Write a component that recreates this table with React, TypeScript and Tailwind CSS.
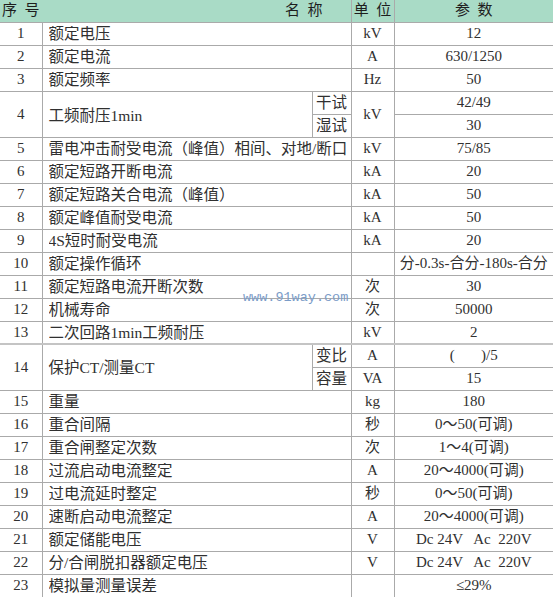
import React from 'react';

type Row = [number, string, string, string];

const rowsA: Row[] = [
  [1, '额定电压', 'kV', '12'],
  [2, '额定电流', 'A', '630/1250'],
  [3, '额定频率', 'Hz', '50'],
];

const rowsB: Row[] = [
  [5, '雷电冲击耐受电流（峰值）相间、对地/断口', 'kV', '75/85'],
  [6, '额定短路开断电流', 'kA', '20'],
  [7, '额定短路关合电流（峰值）', 'kA', '50'],
  [8, '额定峰值耐受电流', 'kA', '50'],
  [9, '4S短时耐受电流', 'kA', '20'],
  [10, '额定操作循环', '', '分-0.3s-合分-180s-合分'],
  [11, '额定短路电流开断次数', '次', '30'],
  [12, '机械寿命', '次', '50000'],
  [13, '二次回路1min工频耐压', 'kV', '2'],
];

const rowsC: Row[] = [
  [15, '重量', 'kg', '180'],
  [16, '重合间隔', '秒', '0～50(可调)'],
  [17, '重合闸整定次数', '次', '1～4(可调)'],
  [18, '过流启动电流整定', 'A', '20～4000(可调)'],
  [19, '过电流延时整定', '秒', '0～50(可调)'],
  [20, '速断启动电流整定', 'A', '20～4000(可调)'],
  [21, '额定储能电压', 'V', 'Dc 24V   Ac  220V'],
  [22, '分/合闸脱扣器额定电压', 'V', 'Dc 24V   Ac  220V'],
  [23, '模拟量测量误差', '', '≤29%'],
];

const line = 'border-b border-r border-[#aaaaaa]';
const cell = `${line} text-center whitespace-pre overflow-hidden p-0`;
const last = 'border-b border-[#aaaaaa] text-center whitespace-pre p-0';

const PlainRow = ({ r }: { r: Row }) => (
  <tr className="h-[23px]">
    <td className={cell}>{r[0]}</td>
    <td colSpan={2} className={`${line} text-left pl-[6px] text-[15.5px]`}>
      <div className="w-[302px] overflow-hidden whitespace-nowrap">{r[1]}</div>
    </td>
    <td className={cell}>{r[2]}</td>
    <td className={last}>{r[3]}</td>
  </tr>
);

export default function App() {
  return (
    <div className="relative w-[553px] h-[597px] overflow-hidden bg-white text-[15px] leading-none text-[#303030] [font-family:'Liberation_Serif','Noto_Sans_CJK_SC',serif]">
      <table className="w-[553px] table-fixed border-collapse">
        <colgroup>
          <col className="w-[42px]" />
          <col className="w-[270px]" />
          <col className="w-[39px]" />
          <col className="w-[43px]" />
          <col className="w-[159px]" />
        </colgroup>
        <tbody>
          <tr className="h-[22px] bg-[#a9dbc6] text-[#1e1e1e]">
            <td className="border-b border-[#aaaaaa] text-left pl-[2px] whitespace-pre">序  号</td>
            <td colSpan={2} className="border-b border-r border-[#aaaaaa] text-right pr-[28px] whitespace-pre">名  称</td>
            <td className="border-b border-r border-[#aaaaaa] text-center whitespace-pre">单  位</td>
            <td className="border-b border-[#aaaaaa] text-center whitespace-pre">参  数</td>
          </tr>
          {rowsA.map((r) => (
            <PlainRow key={r[0]} r={r} />
          ))}
          <tr className="h-[23px]">
            <td rowSpan={2} className={cell}>4</td>
            <td rowSpan={2} className={`${line} text-left pl-[6px] pt-[3px] text-[15.5px]`}>工频耐压1min</td>
            <td className={`${cell} text-[15.5px]`}>干试</td>
            <td rowSpan={2} className={cell}>kV</td>
            <td className={last}>42/49</td>
          </tr>
          <tr className="h-[23px]">
            <td className={`${cell} text-[15.5px]`}>湿试</td>
            <td className={last}>30</td>
          </tr>
          {rowsB.map((r) => (
            <PlainRow key={r[0]} r={r} />
          ))}
          <tr className="h-[23px] border-t-2 border-[#c4c4c4]">
            <td rowSpan={2} className={cell}>14</td>
            <td rowSpan={2} className={`${line} text-left pl-[6px] text-[15.5px]`}>保护CT/测量CT</td>
            <td className={`${cell} text-[15.5px]`}>变比</td>
            <td className={cell}>A</td>
            <td className={last}>(       )/5</td>
          </tr>
          <tr className="h-[23px]">
            <td className={`${cell} text-[15.5px]`}>容量</td>
            <td className={cell}>VA</td>
            <td className={last}>15</td>
          </tr>
          {rowsC.map((r) => (
            <PlainRow key={r[0]} r={r} />
          ))}
        </tbody>
      </table>
      <div className="absolute left-[243px] top-[291px] text-[13.5px] leading-none text-[#7b9cc8] [font-family:'Liberation_Mono',monospace]">
        www.91way.com
      </div>
    </div>
  );
}
